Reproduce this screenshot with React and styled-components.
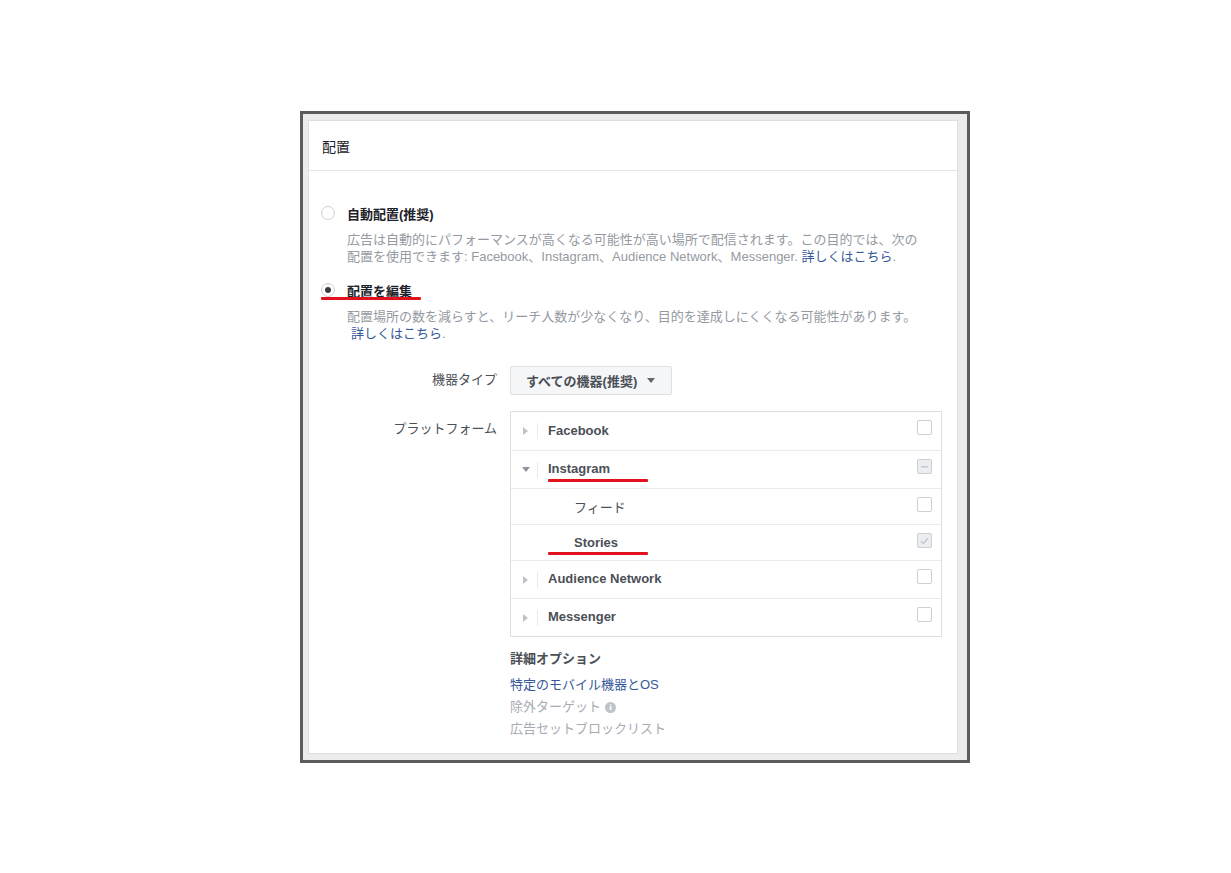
import React from 'react'
import styled, { createGlobalStyle } from 'styled-components'

const GlobalStyle = createGlobalStyle`
  html, body {
    margin: 0;
    background: #ffffff;
  }
  body {
    font-family: "Liberation Sans", "Noto Sans CJK JP", sans-serif;
    color: #4b4f56;
  }
`

const Page = styled.div`
  padding: 111px 0 0 300px;
`

const Frame = styled.div`
  width: 670px;
  box-sizing: border-box;
  border: 3px solid #5c5c5c;
  background: #ececec;
  padding: 6px 9px 6px 5px;
`

const Card = styled.section`
  background: #ffffff;
  border: 1px solid #dddfe2;
`

const Header = styled.div`
  height: 49px;
  display: flex;
  align-items: center;
  padding-left: 13px;
  border-bottom: 1px solid #e5e5e5;
  font-size: 14px;
  color: #1d2129;
`

const Body = styled.div`
  padding: 33px 15px 13px 12px;
`

const Option = styled.div`
  margin-bottom: ${p => p.$gap || 0}px;
`

const RadioRow = styled.label`
  position: relative;
  display: flex;
  align-items: center;
  gap: 12px;
  height: 18px;
  font-size: 13px;
  font-weight: bold;
  color: #1d2129;
`

const Radio = styled.span`
  width: 14px;
  height: 14px;
  border-radius: 50%;
  border: 1px solid #ccd0d5;
  box-sizing: border-box;
  background: #fff;
  display: flex;
  align-items: center;
  justify-content: center;
  &::after {
    content: '';
    width: 6px;
    height: 6px;
    border-radius: 50%;
    background: #3b3f45;
    display: ${p => (p.$checked ? 'block' : 'none')};
  }
`

const Mark = styled.span`
  position: absolute;
  left: ${p => p.$left}px;
  top: ${p => p.$top}px;
  width: ${p => p.$width}px;
  height: 3px;
  background: #e1121c;
  border-radius: 1px;
`

const Desc = styled.p`
  margin: 9px 0 0 26px;
  font-size: 13px;
  line-height: 17px;
  color: #959aa2;
`

const Link = styled.a`
  color: #365899;
  text-decoration: none;
  margin-left: ${p => p.$indent || 0}px;
  cursor: pointer;
`

const FormGrid = styled.div`
  display: grid;
  grid-template-columns: 176px 432px;
  column-gap: 13px;
  row-gap: 16px;
  margin-top: 24px;
`

const FieldLabel = styled.div`
  text-align: right;
  font-size: 13px;
  color: #4b4f56;
  line-height: 18px;
  padding-top: ${p => p.$top}px;
`

const Dropdown = styled.button`
  justify-self: start;
  display: flex;
  align-items: center;
  height: 29px;
  padding: 0 16px 0 15px;
  border: 1px solid #dddfe2;
  border-radius: 2px;
  background: #f5f6f7;
  font-family: inherit;
  font-size: 13px;
  font-weight: bold;
  color: #4b4f56;
  &::after {
    content: '';
    margin-left: 10px;
    border-left: 4px solid transparent;
    border-right: 4px solid transparent;
    border-top: 5px solid #606770;
  }
`

const Table = styled.div`
  border: 1px solid #dddfe2;
`

const Row = styled.div`
  position: relative;
  box-sizing: border-box;
  display: flex;
  align-items: center;
  height: ${p => (p.$sub ? 36 : 38)}px;
  border-top: ${p => (p.$first ? 'none' : '1px solid #e9ebee')};
  padding: 0 9px 0 ${p => (p.$sub ? 63 : 10)}px;
`

const Caret = styled.span`
  width: 9px;
  display: flex;
  justify-content: center;
  &::before {
    content: '';
    ${p =>
      p.$open
        ? `border-left: 4px solid transparent;
           border-right: 4px solid transparent;
           border-top: 5px solid #90949c;`
        : `border-top: 4px solid transparent;
           border-bottom: 4px solid transparent;
           border-left: 5px solid #bec2c9;`}
  }
`

const Divider = styled.span`
  width: 1px;
  height: 16px;
  background: #e9ebee;
  margin: 0 10px 0 7px;
`

const RowName = styled.span`
  flex: 1;
  font-size: 13px;
  font-weight: bold;
  color: #4b4f56;
  margin-top: -2px;
`

const SubName = styled(RowName)`
  font-weight: ${p => (p.$jp ? 'normal' : 'bold')};
  margin-top: 0;
`

const Box = styled.span`
  align-self: flex-start;
  margin-top: 8px;
  width: 15px;
  height: 15px;
  box-sizing: border-box;
  border: 1px solid #ccd0d5;
  border-radius: 2px;
  background: ${p => (p.$disabled ? '#ebedf0' : '#fff')};
  display: flex;
  align-items: center;
  justify-content: center;
`

const Details = styled.div`
  grid-column: 2;
  margin-top: -3px;
`

const DetailsTitle = styled.div`
  font-size: 13px;
  font-weight: bold;
  line-height: 18px;
  color: #4b4f56;
  margin-bottom: 6px;
`

const DetailItem = styled.div`
  font-size: 13px;
  line-height: 22px;
  color: ${p => (p.$link ? '#365899' : '#a7abb2')};
  display: flex;
  align-items: center;
  gap: 4px;
`

const Info = styled.span`
  width: 11px;
  height: 11px;
  border-radius: 50%;
  background: #bec2c9;
  color: #fff;
  font-size: 9px;
  font-weight: bold;
  line-height: 11px;
  text-align: center;
  font-family: "Liberation Serif", serif;
`

const CheckBox = ({ state }) => (
  <Box $disabled={state === 'mixed' || state === 'checked'}>
    {state === 'mixed' && (
      <svg width="7" height="2" viewBox="0 0 7 2">
        <rect width="7" height="1.5" fill="#c4c7cc" />
      </svg>
    )}
    {state === 'checked' && (
      <svg width="9" height="8" viewBox="0 0 9 8">
        <path d="M1 4.2 L3.4 6.4 L8 1.2" fill="none" stroke="#c4c7cc" strokeWidth="1.4" />
      </svg>
    )}
  </Box>
)

const platforms = [
  { name: 'Facebook', box: 'empty' },
  { name: 'Instagram', box: 'mixed', open: true, mark: 28 },
  { name: 'フィード', box: 'empty', sub: true, jp: true },
  { name: 'Stories', box: 'checked', sub: true, mark: 27 },
  { name: 'Audience Network', box: 'empty' },
  { name: 'Messenger', box: 'empty' },
]

export default function App() {
  return (
    <Page>
      <GlobalStyle />
      <Frame>
        <Card>
          <Header>配置</Header>
          <Body>
            <Option $gap={16}>
              <RadioRow>
                <Radio />
                自動配置(推奨)
              </RadioRow>
              <Desc>
                広告は自動的にパフォーマンスが高くなる可能性が高い場所で配信されます。この目的では、次の
                <br />
                配置を使用できます: Facebook、Instagram、Audience Network、Messenger. <Link>詳しくはこちら</Link>.
              </Desc>
            </Option>

            <Option>
              <RadioRow>
                <Radio $checked />
                配置を編集
                <Mark $left={0} $top={16} $width={100} />
              </RadioRow>
              <Desc>
                配置場所の数を減らすと、リーチ人数が少なくなり、目的を達成しにくくなる可能性があります。
                <br />
                <Link $indent={4}>詳しくはこちら</Link>.
              </Desc>
            </Option>

            <FormGrid>
              <FieldLabel $top={5}>機器タイプ</FieldLabel>
              <Dropdown>すべての機器(推奨)</Dropdown>

              <FieldLabel $top={9}>プラットフォーム</FieldLabel>
              <Table>
                {platforms.map((p, i) => (
                  <Row key={p.name} $first={i === 0} $sub={p.sub}>
                    {p.sub ? (
                      <SubName $jp={p.jp}>{p.name}</SubName>
                    ) : (
                      <>
                        <Caret $open={p.open} />
                        <Divider />
                        <RowName>{p.name}</RowName>
                      </>
                    )}
                    <CheckBox state={p.box} />
                    {p.mark && <Mark $left={37} $top={p.mark} $width={100} />}
                  </Row>
                ))}
              </Table>

              <Details>
                <DetailsTitle>詳細オプション</DetailsTitle>
                <DetailItem $link>特定のモバイル機器とOS</DetailItem>
                <DetailItem>
                  除外ターゲット <Info>i</Info>
                </DetailItem>
                <DetailItem>広告セットブロックリスト</DetailItem>
              </Details>
            </FormGrid>
          </Body>
        </Card>
      </Frame>
    </Page>
  )
}
